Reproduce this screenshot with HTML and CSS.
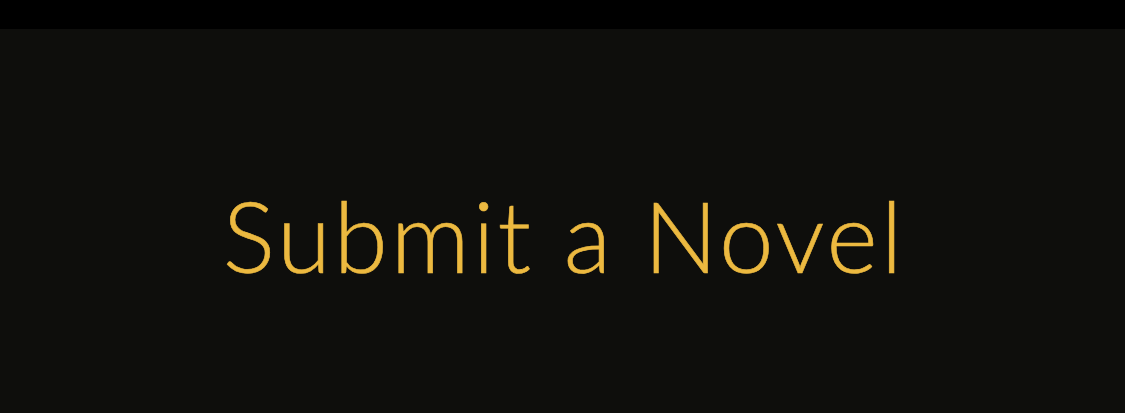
FILE: index.html
```html
<!DOCTYPE html>
<html lang="en">
<head>
<meta charset="utf-8">
<title>Submit a Novel</title>
<link rel="stylesheet" href="styles.css">
</head>
<body>
<div class="topbar"></div>
<main class="hero">
  <h1 class="title">Submit a Novel</h1>
</main>
</body>
</html>
```
FILE: styles.css
```css
html, body {
  margin: 0;
  padding: 0;
  background: #0e0e0c;
}
.topbar {
  height: 29px;
  background: #000;
}
.hero {
  height: 384px;
  display: flex;
  align-items: center;
  justify-content: center;
  padding-top: 28px;
  box-sizing: border-box;
}
.title {
  margin: 0;
  padding-left: 3px;
  font-family: Lato, "Liberation Sans", sans-serif;
  font-weight: 300;
  font-size: 98px;
  letter-spacing: 3px;
  line-height: 1;
  color: #ecb940;
  -webkit-text-stroke: 0.6px #ecb940;
}
```
